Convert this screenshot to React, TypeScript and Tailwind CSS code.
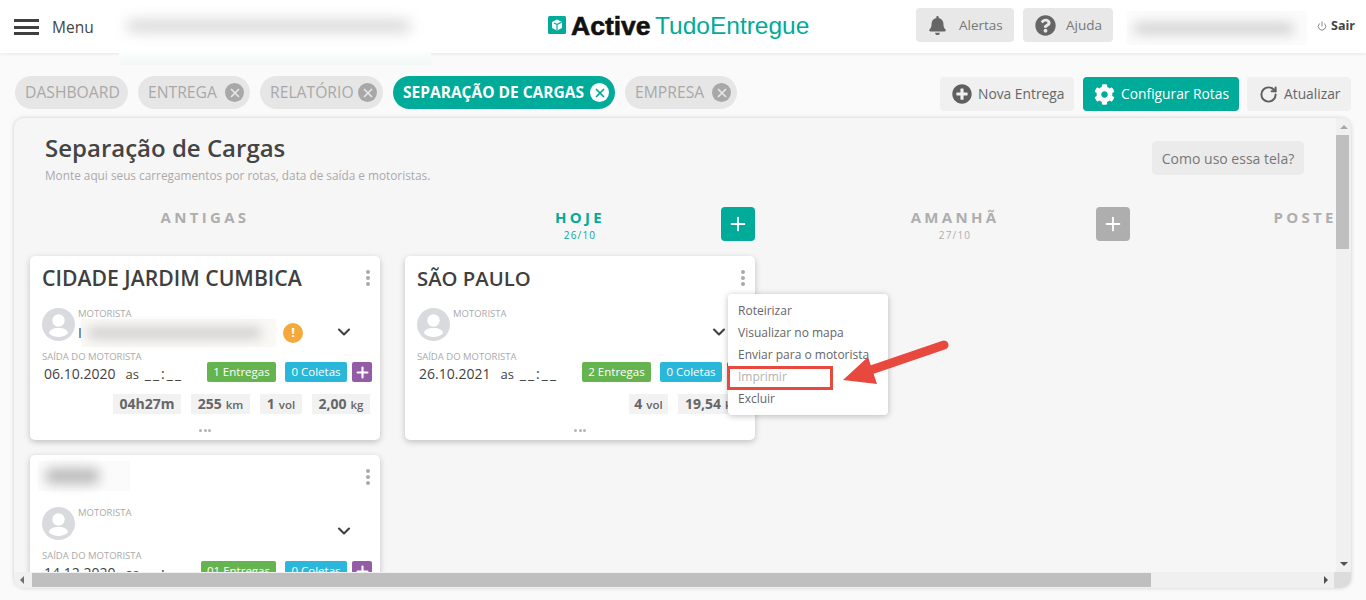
import React from "react";
import { ChevronDown, Power, RotateCw, Plus, X } from "lucide-react";
import { FaBell, FaCog, FaPlusCircle, FaQuestionCircle } from "react-icons/fa";

function Tab({ label, active, close = true, w }: { label: string; active?: boolean; close?: boolean; w: string }) {
  return (
    <div className={`flex h-[33px] items-center justify-between rounded-full pl-[10px] pr-[6px] ${w} ${active ? "bg-[#00ab99] text-[15.5px] font-bold text-white" : "bg-[#e6e6e6] text-[15.700px] text-[#a9a9a9]"}`}>
      <span className="mt-[1px] whitespace-nowrap">{label}</span>
      {close && (
        <span className={`flex h-[19px] w-[19px] items-center justify-center rounded-full ${active ? "bg-white text-[#00ab99]" : "bg-[#a8a8a8] text-[#e6e6e6]"}`}>
          <X size={14} strokeWidth={3} />
        </span>
      )}
    </div>
  );
}

function Avatar() {
  return (
    <svg width="33" height="33" viewBox="0 0 33 33" className="shrink-0">
      <circle cx="16.5" cy="16.5" r="16.5" fill="#d9dadd" />
      <circle cx="16.5" cy="12.5" r="6.2" fill="#fff" />
      <path d="M7 25.5c0-3.6 4-5.5 9.5-5.5s9.5 1.9 9.5 5.5c-2.4 2.2-5.8 3.5-9.5 3.5S9.400 27.700 7 25.500z" fill="#fff" />
    </svg>
  );
}

function Kebab() {
  return (
    <div className="flex flex-col gap-[2px]">
      <span className="h-[4px] w-[4px] rounded-full bg-[#aaaaaa]" />
      <span className="h-[4px] w-[4px] rounded-full bg-[#aaaaaa]" />
      <span className="h-[4px] w-[4px] rounded-full bg-[#aaaaaa]" />
    </div>
  );
}

function Stat({ v, u, w }: { v: string; u?: string; w: string }) {
  return (
    <div className={`flex h-[20px] items-baseline justify-center whitespace-nowrap bg-[#f2f2f2] font-bold leading-[20px] text-[#666666] ${w}`}>
      <span className="text-[14px]">{v}</span>
      {u && <span className="ml-[4px] text-[11.500px] font-semibold">{u}</span>}
    </div>
  );
}

function Card({
  title,
  titleSize,
  blurredTitle,
  driver,
  date,
  entregas,
  entregasW,
  stats,
}: {
  title?: string;
  titleSize?: string;
  blurredTitle?: boolean;
  driver?: boolean;
  date: string;
  entregas: string;
  entregasW: string;
  stats: React.ReactNode;
}) {
  return (
    <div className="h-[184px] w-[350px] shrink-0 rounded-[5px] bg-white shadow-[0_2px_6px_rgba(0,0,0,0.22)]">
      <div className="flex h-[44px] items-center justify-between pl-[12px] pr-[10px]">
        {blurredTitle ? (
          <div className="ml-[-4px] mt-[-2px] flex h-[30px] w-[92px] items-center bg-[#fbfbfb] pl-[7px]">
            <div className="h-[16px] w-[55px] rounded-full bg-[#bcbcbc] blur-[6px]" />
          </div>
        ) : (
          <span className={`font-semibold leading-none text-[#3f3f3f] ${titleSize}`}>{title}</span>
        )}
        <Kebab />
      </div>
      <div className="relative mt-[8px] flex h-[33px] pl-[12px]">
        <Avatar />
        <div className="ml-[3px] mt-[1px] text-[9.500px] leading-[10px] text-[#aaaaaa]">MOTORISTA</div>
        {driver && (
          <div className="absolute left-[48px] top-[11px] flex items-center">
            <span className="w-[3px] text-[14px] leading-none text-[#3f3f3f]">I</span>
            <div className="flex h-[28px] w-[195px] items-center bg-[#fbf9f6] pl-[6px]">
              <div className="h-[12px] w-[175px] rounded-full bg-[#cfcfcf] blur-[6px]" />
            </div>
            <span className="ml-[7px] flex h-[20px] w-[20px] items-center justify-center rounded-full bg-[#f6a93b] text-[13px] font-bold text-white">!</span>
          </div>
        )}
        <ChevronDown size={20} strokeWidth={2.5} className="absolute left-[304px] top-[14px] text-[#3f3f3f]" />
      </div>
      <div className="mt-[11px] pl-[12px] text-[9.500px] leading-[10px] text-[#aaaaaa]">SAÍDA DO MOTORISTA</div>
      <div className="flex h-[20px] items-center justify-between pl-[14px] pr-[8px]">
        <div className="mt-[4px] flex whitespace-nowrap text-[14px] leading-[20px] text-[#3f3f3f]">
          <span>{date}</span>
          <span className="ml-[10px] text-[13px]">as</span>
          <span className="ml-[6px] text-[14px] tracking-[2px]">__:__</span>
        </div>
        <div className="flex items-center">
          <div className={`flex h-[20px] items-center justify-center rounded-[2px] bg-[#66b44f] text-[11.5px] text-white ${entregasW}`}>{entregas}</div>
          <div className="ml-[9px] flex h-[20px] w-[62px] items-center justify-center rounded-[2px] bg-[#2bb7d9] text-[11.5px] text-white">0 Coletas</div>
          <div className="ml-[5px] flex h-[20px] w-[20px] items-center justify-center rounded-[2px] bg-[#945ba6] text-white">
            <Plus size={17} strokeWidth={3} />
          </div>
        </div>
      </div>
      <div className="mt-[12px] flex justify-end gap-[10px] pr-[10px]">{stats}</div>
      <div className="mt-[15px] flex justify-center gap-[1.5px]">
        <span className="h-[3px] w-[3px] rounded-full bg-[#b3b3b3]" />
        <span className="h-[3px] w-[3px] rounded-full bg-[#b3b3b3]" />
        <span className="h-[3px] w-[3px] rounded-full bg-[#b3b3b3]" />
      </div>
    </div>
  );
}

function ColHead({ title, sub, color, plus }: { title: string; sub?: string; color: string; plus?: string }) {
  return (
    <div className="grid h-[34px] w-[350px] grid-cols-[34px_1fr_34px]">
      <div />
      <div className={`flex flex-col items-center whitespace-nowrap ${color}`}>
        <span className="text-[15px] font-bold leading-[22px] tracking-[3.3px] mt-[-1px]">{title}</span>
        {sub && <span className="mt-[1px] text-[10px] leading-[12px] tracking-[1.2px]">{sub}</span>}
      </div>
      {plus && (
        <div className={`flex h-[34px] w-[34px] items-center justify-center rounded-[4px] text-white ${plus}`}>
          <Plus size={22} strokeWidth={2} />
        </div>
      )}
    </div>
  );
}

const F = { fontFamily: '"Open Sans", sans-serif' };

export default function App() {
  return (
    <div style={F} className="relative h-[600px] w-[1366px] overflow-hidden bg-[#fafafa]">
      <header className="flex h-[53px] items-start bg-white shadow-[0_1px_3px_rgba(0,0,0,0.08)]">
        <div className="ml-[14px] mt-[19px] flex h-[16px] w-[25px] flex-col justify-between">
          <span className="h-[3px] bg-[#3f3f3f]" />
          <span className="h-[3px] bg-[#3f3f3f]" />
          <span className="h-[3px] bg-[#3f3f3f]" />
        </div>
        <span className="ml-[13px] mt-[17px] w-[43px] whitespace-nowrap text-[15.500px] leading-[21px] text-[#444444]">Menu</span>
        <div className="relative z-10 ml-[24px] mt-[8px] flex h-[57px] w-[312px] shrink-0 items-start bg-gradient-to-b from-white from-70% to-[#f3f8f7] pl-[7px] pt-[12px]">
          <div className="h-[12px] w-[285px] rounded-full bg-[#d6d6d6] blur-[7px]" />
        </div>
        <svg width="18" height="18" viewBox="0 0 18 18" className="ml-[117px] mt-[16px] shrink-0">
          <rect width="18" height="18" rx="1.500" fill="#00ab99" />
          <path d="M9 3.500l5 2.400v6L9 14.500l-5-2.600v-6z" fill="#fff" />
          <path d="M9 8.500V14M9 8.500l4.500-2.400M9 8.500L6 7" stroke="#00ab99" strokeWidth="1.200" fill="none" />
        </svg>
        <span className="ml-[5px] mt-[11px] w-[79px] whitespace-nowrap text-[26.500px] font-bold leading-[30px] text-[#111111] [-webkit-text-stroke:0.6px_#111111] [font-family:'Liberation_Sans',sans-serif]">Active</span>
        <span className="ml-[5px] mt-[11px] w-[153px] whitespace-nowrap text-[24.500px] leading-[30px] text-[#00ab99] [font-family:'Liberation_Sans',sans-serif]">TudoEntregue</span>
        <div className="ml-[108px] mt-[8px] flex h-[34px] w-[98px] items-center rounded-[4px] bg-[#e8e8e8] pl-[12px] text-[13.500px] text-[#777777]">
          <FaBell size={19} className="text-[#666666]" />
          <span className="ml-[12px]">Alertas</span>
        </div>
        <div className="ml-[9px] mt-[8px] flex h-[34px] w-[90px] items-center rounded-[4px] bg-[#e8e8e8] pl-[12px] text-[13.500px] text-[#777777]">
          <FaQuestionCircle size={21} className="text-[#666666]" />
          <span className="ml-[10px]">Ajuda</span>
        </div>
        <div className="ml-[14px] mt-[11px] flex h-[34px] w-[180px] items-center bg-[#fbfbfb] pl-[7px]">
          <div className="h-[11px] w-[160px] rounded-full bg-[#d0d0d0] blur-[6px]" />
        </div>
        <Power size={10} strokeWidth={1.500} className="ml-[10px] mt-[21px] text-[#444444]" />
        <span className="ml-[4px] mt-[17px] text-[12.500px] font-bold leading-[18px] text-[#444444]">Sair</span>
      </header>

      <div className="mt-[23px] flex h-[35px] items-start pl-[15px]">
        <div className="flex gap-[10px]">
          <Tab label="DASHBOARD" close={false} w="w-[113px]" />
          <Tab label="ENTREGA" w="w-[112px]" />
          <Tab label="RELATÓRIO" w="w-[123px]" />
          <Tab label="SEPARAÇÃO DE CARGAS" active w="w-[222px]" />
          <Tab label="EMPRESA" w="w-[112px]" />
        </div>
        <div className="ml-[203px] mt-[1px] flex gap-[9px] text-[13.800px]">
          <div className="flex h-[34px] w-[134px] items-center whitespace-nowrap rounded-[4px] bg-[#f0f0f0] pl-[12px] text-[#666666]">
            <FaPlusCircle size={20} className="text-[#5f5f5f]" />
            <span className="ml-[6px]">Nova Entrega</span>
          </div>
          <div className="flex h-[34px] w-[156px] items-center whitespace-nowrap rounded-[4px] bg-[#00ab99] pl-[11px] text-white">
            <FaCog size={21} />
            <span className="ml-[6px]">Configurar Rotas</span>
          </div>
          <div className="ml-[-1px] flex h-[34px] w-[104px] items-center whitespace-nowrap rounded-[4px] bg-[#f0f0f0] pl-[12px] text-[#666666]">
            <RotateCw size={19} strokeWidth={2.500} className="text-[#5f5f5f]" />
            <span className="ml-[6px]">Atualizar</span>
          </div>
        </div>
      </div>

      <main className="relative ml-[14px] mt-[7px] flex h-[470px] w-[1337px] flex-col overflow-hidden rounded-[10px] bg-[#f6f6f6] shadow-[0_0_4px_rgba(0,0,0,0.18)]">
        <div className="flex min-h-0 flex-1">
          <div className="min-w-0 flex-1 overflow-hidden">
            <div className="flex items-start justify-between pl-[31px] pr-[32px]">
              <div>
                <h1 className="mt-[13px] text-[24px] font-semibold leading-[33px] text-[#444444]">Separação de Cargas</h1>
                <p className="mt-[3px] text-[11.800px] leading-[17px] text-[#aaaaaa]">Monte aqui seus carregamentos por rotas, data de saída e motoristas.</p>
              </div>
              <div className="mt-[23px] flex h-[34px] w-[152px] items-center justify-center rounded-[5px] bg-[#ebebeb] text-[14px] text-[#777777]">Como uso essa tela?</div>
            </div>
            <div className="mt-[23px] flex gap-[25px] pl-[16px]">
              <div className="flex w-[350px] shrink-0 flex-col gap-[15px]">
                <ColHead title="ANTIGAS" color="text-[#aeaeae]" />
                <Card
                  title="CIDADE JARDIM CUMBICA"
                  titleSize="text-[21.200px]"
                  driver
                  date="06.10.2020"
                  entregas="1 Entregas"
                  entregasW="w-[69px]"
                  stats={
                    <>
                      <Stat v="04h27m" w="w-[68px]" />
                      <Stat v="255" u="km" w="w-[59px]" />
                      <Stat v="1" u="vol" w="w-[42px]" />
                      <Stat v="2,00" u="kg" w="w-[58px]" />
                    </>
                  }
                />
                <Card
                  blurredTitle
                  date="14.12.2020"
                  entregas="01 Entregas"
                  entregasW="w-[75px]"
                  stats={<Stat v="1" u="vol" w="w-[42px]" />}
                />
              </div>
              <div className="flex w-[350px] shrink-0 flex-col gap-[15px]">
                <ColHead title="HOJE" sub="26/10" color="text-[#00ab99]" plus="bg-[#00ab99]" />
                <Card
                  title="SÃO PAULO"
                  titleSize="text-[20.300px]"
                  date="26.10.2021"
                  entregas="2 Entregas"
                  entregasW="w-[69px]"
                  stats={
                    <>
                      <Stat v="4" u="vol" w="w-[39px]" />
                      <Stat v="19,54" u="kg" w="w-[67px]" />
                    </>
                  }
                />
              </div>
              <div className="w-[350px] shrink-0">
                <ColHead title="AMANHÃ" sub="27/10" color="text-[#aeaeae]" plus="bg-[#aeaeae]" />
              </div>
              <div className="w-[350px] shrink-0">
                <ColHead title="POSTERIOR" color="text-[#aeaeae]" />
              </div>
            </div>
          </div>
          <div className="flex w-[15px] shrink-0 flex-col items-start bg-[#f0f0f0]">
            <div className="ml-[4px] mt-[7px] h-0 w-0 border-x-[4px] border-b-[4px] border-x-transparent border-b-[#a8a8a8]" />
            <div className="mt-[6px] h-[114px] w-[13px] bg-[#bfbfbf]" />
            <div className="mb-[6px] ml-[4px] mt-auto h-0 w-0 border-x-[4px] border-t-[4px] border-x-transparent border-t-[#505050]" />
          </div>
        </div>
        <div className="flex h-[16px] shrink-0 items-center bg-[#f0f0f0]">
          <div className="ml-[6px] h-0 w-0 border-y-[4px] border-r-[4px] border-y-transparent border-r-[#707070]" />
          <div className="ml-[8px] h-[14px] w-[1119px] bg-[#bfbfbf]" />
          <div className="ml-auto h-0 w-0 border-y-[4px] border-l-[4px] border-y-transparent border-l-[#505050]" />
          <div className="ml-[6px] h-[16px] w-[17px] bg-[#dcdcdc]" />
        </div>
      </main>

      <div className="absolute left-[728px] top-[294px] z-20 h-[121px] w-[160px] rounded-[4px] bg-white pl-[10px] pt-[6px] text-[12px] leading-[22px] text-[#666666] shadow-[0_1px_6px_rgba(0,0,0,0.25)]">
        <div>Roteirizar</div>
        <div>Visualizar no mapa</div>
        <div>Enviar para o motorista</div>
        <div className="text-[#b3b3b3]">Imprimir</div>
        <div>Excluir</div>
        <div className="absolute left-[-1px] top-[72px] h-[24px] w-[106px] border-[3px] border-[#e8493f]" />
      </div>

      <svg width="120" height="60" viewBox="840 340 120 60" className="absolute left-[840px] top-[340px] z-30">
        <path d="M944 345 L868 371" stroke="#e8493f" strokeWidth="9" strokeLinecap="round" fill="none" />
        <path d="M843 380 L868 357 L877 384 Z" fill="#e8493f" />
      </svg>
    </div>
  );
}
